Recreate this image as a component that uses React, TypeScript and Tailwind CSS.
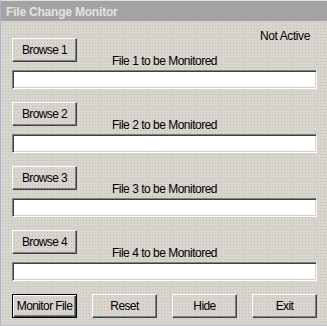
import React from "react";

const files = [1, 2, 3, 4];

const raised =
  "border border-t-white border-l-white border-b-[#404040] border-r-[#404040] shadow-[inset_-1px_-1px_#808080]";

const Button: React.FC<{ label: string; primary?: boolean }> = ({ label, primary }) => (
  <button
    className={`w-[65px] h-[24px] flex items-center justify-center text-[12px] leading-[14px] tracking-[-0.6px] text-black ${
      primary
        ? "border border-black shadow-[inset_1px_1px_#ffffff,inset_-1px_-1px_#404040,inset_-2px_-2px_#808080]"
        : raised
    }`}
  >
    {label}
  </button>
);

export default function App() {
  return (
    <div
      className="w-[327px] h-[326px] flex flex-col border-l border-t border-b border-l-[#a4b8d2] border-t-[#dedede] border-b-[#b4c2d6] bg-[#d8d5ce] text-black"
      style={{ fontFamily: '"Liberation Sans", Arial, sans-serif' }}
    >
      {/* Title bar */}
      <div className="h-[20px] bg-[#a3a3a3] pl-[5px] pt-[4px] text-[12px] leading-[14px] font-bold tracking-[-0.2px] text-[#e2e2e2]">
        File Change Monitor
      </div>

      {/* Body */}
      <div className="flex-1 bg-[radial-gradient(circle,#c3bfb7_0.7px,transparent_0.9px)] bg-[length:3px_3px] pl-[11px] pr-[10px] pt-[17px]">
        {files.map((n) => (
          <div key={n} className="mb-[13px] flex flex-col">
            <div className="grid h-[32px]">
              <div className="col-start-1 row-start-1 self-start justify-self-start">
                <Button label={`Browse ${n}`} />
              </div>
              {n === 1 && (
                <span className="col-start-1 row-start-1 self-start justify-self-end -mt-[9px] mr-[7px] text-[12px] leading-[14px] tracking-[-0.4px]">
                  Not Active
                </span>
              )}
              <span className="col-start-1 row-start-1 self-end justify-self-center mb-[2px] text-[12px] leading-[14px] tracking-[-0.5px]">
                File {n} to be Monitored
              </span>
            </div>
            <div className="h-[19px] w-[305px] bg-white border border-t-[#808080] border-l-[#808080] border-b-white border-r-white shadow-[inset_1px_1px_#404040,inset_-1px_-1px_#d4d0c8]" />
          </div>
        ))}

        <div className="flex justify-between w-[305px]">
          <Button label="Monitor File" primary />
          <Button label="Reset" />
          <Button label="Hide" />
          <Button label="Exit" />
        </div>
      </div>
    </div>
  );
}
